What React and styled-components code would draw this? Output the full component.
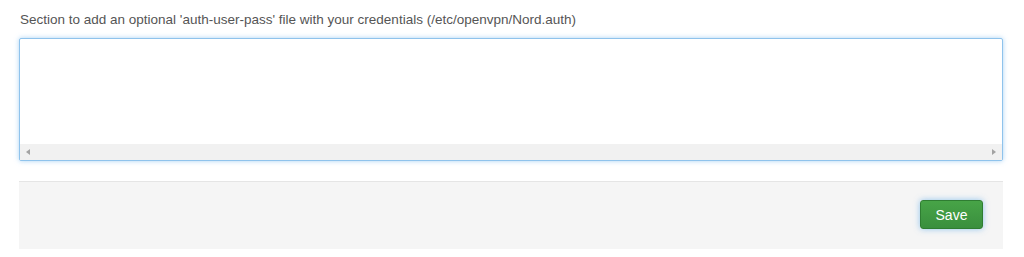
import React from "react";
import styled, { createGlobalStyle } from "styled-components";

const Global = createGlobalStyle`
body {
  margin: 0;
  background: #fff;
  font-family: "Liberation Sans", Arial, sans-serif;
}
`;

function App() {
  return (
    <Page>
      <Global />
      <Label>Section to add an optional 'auth-user-pass' file with your credentials (/etc/openvpn/Nord.auth)</Label>
      <Editor>
        <Area wrap="off" defaultValue="" />
        <Scrollbar>
          <Arrow $dir="left" />
          <Arrow $dir="right" />
        </Scrollbar>
      </Editor>
      <Footer>
        <SaveButton>Save</SaveButton>
      </Footer>
    </Page>
  );
}

const Page = styled.div`
padding: 12px 21px 0 19px;
display: flex;
flex-direction: column;
`;

const Label = styled.div`
font-size: 13.5px;
color: #555;
line-height: 16px;
padding-left: 1px;
margin-bottom: 10px;
`;

const Editor = styled.div`
height: 121px;
border: 1px solid #8fc3ec;
border-radius: 2px;
box-shadow: 0 0 5px rgba(102, 175, 233, 0.55);
background: #fff;
display: flex;
flex-direction: column;
`;

const Area = styled.textarea`
flex: 1;
border: none;
outline: none;
resize: none;
overflow: hidden;
font-family: "Liberation Mono", monospace;
font-size: 13px;
background: transparent;
`;

const Scrollbar = styled.div`
height: 16px;
background: #f1f1f1;
display: flex;
align-items: center;
justify-content: space-between;
padding: 0 6px;
`;

const Arrow = styled.div`
width: 0;
height: 0;
border-top: 3px solid transparent;
border-bottom: 3px solid transparent;
${p => p.$dir === "left" ? "border-right: 4px solid #a3a3a3;" : "border-left: 4px solid #a3a3a3;"}
`;

const Footer = styled.div`
margin-top: 20px;
height: 68px;
background: #f5f5f5;
border-top: 1px solid #e5e5e5;
display: flex;
align-items: flex-start;
justify-content: flex-end;
padding: 18px 20px 0 0;
box-sizing: border-box;
`;

const SaveButton = styled.button`
width: 63px;
height: 29px;
background: linear-gradient(#47a447, #3a8f3e);
border: 1px solid #2f7d32;
border-radius: 3px;
color: #fff;
font-family: "Liberation Sans", Arial, sans-serif;
font-size: 14px;
box-shadow: 0 0 6px rgba(102, 175, 233, 0.7);
cursor: pointer;
`;

export default App;
